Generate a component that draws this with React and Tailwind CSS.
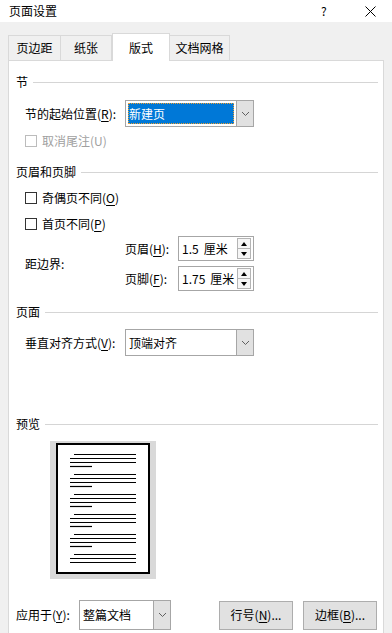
const font = "font-['Noto_Sans_CJK_SC','Microsoft_YaHei',sans-serif]"

function Key({ children }) {
  return <span className="underline underline-offset-[2px] decoration-1">{children}</span>
}

function Chevron() {
  return (
    <svg width="9" height="6" viewBox="0 0 9 6" fill="none">
      <polyline points="1,1 4.5,4.5 8,1" stroke="#606060" strokeWidth="1" />
    </svg>
  )
}

function Select({ value, focused, className }) {
  return (
    <div className={`flex h-[27px] border border-[#a6a6a6] bg-white ${className}`}>
      <div className="flex-1 p-[2px] flex">
        {focused ? (
          <div className="flex-1 bg-[#0078d7] text-white outline-1 outline-dotted outline-[#f0a030] -outline-offset-1 flex items-center pl-[1px]">
            {value}
          </div>
        ) : (
          <div className="flex-1 flex items-center pl-[1px] text-black">{value}</div>
        )}
      </div>
      <div className="w-[17px] bg-[#e1e1e1] border-l border-[#a6a6a6] flex items-center justify-center">
        <Chevron />
      </div>
    </div>
  )
}

function Spin({ num }) {
  return (
    <div className="flex w-[76px] h-[25px] border border-[#a6a6a6] bg-white">
      <div className="flex-1 flex items-center pl-[3px] gap-[5px]">
        <span>{num}</span>
        <span>厘米</span>
      </div>
      <div className="w-[14px] my-[1px] mr-[2px] flex flex-col">
        <div className="flex-1 border border-[#b4b4b4] bg-[#f6f6f6] flex items-center justify-center">
          <svg width="6" height="4" viewBox="0 0 6 4"><polygon points="0,4 3,0 6,4" fill="#000" /></svg>
        </div>
        <div className="flex-1 border border-t-0 border-[#b4b4b4] bg-[#f6f6f6] flex items-center justify-center">
          <svg width="6" height="4" viewBox="0 0 6 4"><polygon points="0,0 3,4 6,0" fill="#000" /></svg>
        </div>
      </div>
    </div>
  )
}

function Check({ label, disabled, className }) {
  return (
    <div className={`flex items-center h-[16px] pl-[16px] ${className}`}>
      <span className={`w-[12px] h-[12px] border bg-white ${disabled ? 'border-[#bcbcbc]' : 'border-[#333]'}`} />
      <span className={`ml-[5px] ${disabled ? 'text-[#a0a0a0]' : 'text-black'}`}>{label}</span>
    </div>
  )
}

function Header({ title, className }) {
  return (
    <div className={`flex items-center h-[16px] pl-[7px] pr-[5px] ${className}`}>
      <span>{title}</span>
      <span className="flex-1 h-px bg-[#d5d5d5] ml-[5px]" />
    </div>
  )
}

function Preview() {
  const groups = [13, 33, 53, 73, 93, 113]
  return (
    <svg width="106" height="138" viewBox="0 0 106 138" className="ml-[41px] mt-[9px]">
      <rect x="0" y="0" width="106" height="138" fill="#d9d9d9" />
      <rect x="7" y="3" width="92" height="129" fill="#fff" stroke="#000" strokeWidth="2" />
      {groups.map((y, i) => (
        <g key={i} stroke="#000" strokeWidth="1.2">
          <line x1="24" x2="86" y1={y + 0.5} y2={y + 0.5} />
          <line x1="20" x2="86" y1={y + 4.5} y2={y + 4.5} />
          <line x1="20" x2="86" y1={y + 8.5} y2={y + 8.5} />
          {i < 5 && <line x1="20" x2="42" y1={y + 12.5} y2={y + 12.5} />}
        </g>
      ))}
    </svg>
  )
}

export default function App() {
  const tabs = ['页边距', '纸张', '版式', '文档网格']
  const widths = ['w-[53px]', 'w-[52px]', 'w-[58px]', 'w-[61px]']

  return (
    <div className={`w-[392px] h-[633px] overflow-hidden bg-[#f0f0f0] text-[12px] leading-[16px] text-black ${font}`}>
      {/* title bar */}
      <div className="h-[22px] bg-white flex items-center pl-[9px]">
        <span className="flex-1">页面设置</span>
        <span className="w-[6px] mr-[38px] text-[12px]">?</span>
        <svg width="11" height="11" viewBox="0 0 11 11" className="mr-[16px]">
          <path d="M0.5 0.5 L10.5 10.5 M10.5 0.5 L0.5 10.5" stroke="#000" strokeWidth="1" />
        </svg>
      </div>

      {/* tabs */}
      <div className="flex items-end h-[38px] pl-[8px]">
        {tabs.map((t, i) =>
          i === 2 ? (
            <div key={t} className={`${widths[i]} h-[28px] -mb-px bg-white border border-b-0 border-[#d9d9d9] flex items-center justify-center relative z-10`}>
              {t}
            </div>
          ) : (
            <div key={t} className={`${widths[i]} h-[25px] border border-b-0 border-[#d9d9d9] -ml-px first:ml-0 flex items-center justify-center`}>
              {t}
            </div>
          )
        )}
      </div>

      {/* panel */}
      <div className="mx-[8px] h-[600px] bg-white border border-[#d9d9d9] flex flex-col">
        <Header title="节" className="mt-[13px]" />
        <div className="flex items-center mt-[10px] pl-[16px]">
          <span className="w-[100px]">节的起始位置(<Key>R</Key>):</span>
          <Select value="新建页" focused className="w-[129px]" />
        </div>
        <Check label={<>取消尾注(U)</>} disabled className="mt-[6px]" />

        <Header title="页眉和页脚" className="mt-[15px]" />
        <Check label={<>奇偶页不同(<Key>O</Key>)</>} className="mt-[10px]" />
        <Check label={<>首页不同(<Key>P</Key>)</>} className="mt-[10px]" />
        <div className="flex items-center mt-[4px] pl-[16px]">
          <span className="w-[100px]">距边界:</span>
          <div className="flex flex-col gap-[5px]">
            <div className="flex items-center">
              <span className="w-[53px]">页眉(<Key>H</Key>):</span>
              <Spin num="1.5" />
            </div>
            <div className="flex items-center">
              <span className="w-[53px]">页脚(<Key>F</Key>):</span>
              <Spin num="1.75" />
            </div>
          </div>
        </div>

        <Header title="页面" className="mt-[13px]" />
        <div className="flex items-center mt-[9px] pl-[16px]">
          <span className="w-[100px]">垂直对齐方式(<Key>V</Key>):</span>
          <Select value="顶端对齐" className="w-[129px]" />
        </div>

        <Header title="预览" className="mt-[60px]" />
        <Preview />

        <div className="flex items-center mt-[21px] pl-[7px]">
          <span className="w-[63px]">应用于(<Key>Y</Key>):</span>
          <Select value="整篇文档" className="w-[92px] h-[30px]" />
          <button className="ml-[48px] w-[74px] h-[29px] bg-[#e1e1e1] border border-[#adadad]">
            行号(<Key>N</Key>)...
          </button>
          <button className="ml-[10px] w-[74px] h-[29px] bg-[#e1e1e1] border border-[#adadad]">
            边框(<Key>B</Key>)...
          </button>
        </div>
      </div>
    </div>
  )
}
